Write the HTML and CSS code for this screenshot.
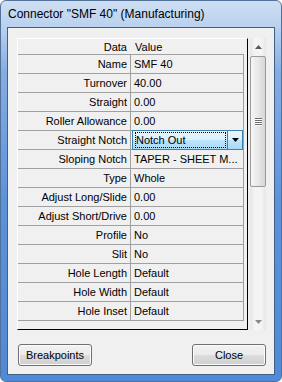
FILE: index.html
```html
<!DOCTYPE html>
<html lang="en">
<head>
    <meta charset="UTF-8">
    <title>Connector "SMF 40" (Manufacturing)</title>
    <link rel="stylesheet" href="styles.css">
</head>
<body>
    <div class="window">
        <div class="titlebar">Connector "SMF 40" (Manufacturing)</div>
        <div class="client">
            <div class="gridarea">
                <div class="grid">
                    <div class="row head">
                        <div class="label">Data</div>
                        <div class="value">Value</div>
                    </div>
                    <div class="row"><div class="label">Name</div><div class="value">SMF 40</div></div>
                    <div class="row"><div class="label">Turnover</div><div class="value">40.00</div></div>
                    <div class="row"><div class="label">Straight</div><div class="value">0.00</div></div>
                    <div class="row"><div class="label">Roller Allowance</div><div class="value">0.00</div></div>
                    <div class="row">
                        <div class="label">Straight Notch</div>
                        <div class="value">
                            <div class="combo">
                                <div class="combo-text"><span class="focus">Notch Out</span></div>
                                <div class="combo-btn">
                                    <svg width="7" height="4" viewBox="0 0 7 4"><path d="M0 0h7L3.5 4z" fill="#000"/></svg>
                                </div>
                            </div>
                        </div>
                    </div>
                    <div class="row"><div class="label">Sloping Notch</div><div class="value">TAPER - SHEET M...</div></div>
                    <div class="row"><div class="label">Type</div><div class="value">Whole</div></div>
                    <div class="row"><div class="label">Adjust Long/Slide</div><div class="value">0.00</div></div>
                    <div class="row"><div class="label">Adjust Short/Drive</div><div class="value">0.00</div></div>
                    <div class="row"><div class="label">Profile</div><div class="value">No</div></div>
                    <div class="row"><div class="label">Slit</div><div class="value">No</div></div>
                    <div class="row"><div class="label">Hole Length</div><div class="value">Default</div></div>
                    <div class="row"><div class="label">Hole Width</div><div class="value">Default</div></div>
                    <div class="row"><div class="label">Hole Inset</div><div class="value">Default</div></div>
                </div>
                <div class="scrollbar">
                    <div class="arrow">
                        <svg width="7" height="4" viewBox="0 0 7 4"><path d="M3.5 0L7 4H0z" fill="#5a5a5a"/></svg>
                    </div>
                    <div class="track">
                        <div class="thumb">
                            <div class="grip"></div>
                        </div>
                    </div>
                    <div class="arrow">
                        <svg width="7" height="4" viewBox="0 0 7 4"><path d="M0 0h7L3.5 4z" fill="#8a8a8a"/></svg>
                    </div>
                </div>
            </div>
            <div class="buttons">
                <button class="button">Breakpoints</button>
                <button class="button">Close</button>
            </div>
        </div>
    </div>
</body>
</html>
```

FILE: styles.css
```css
body {
    margin: 0;
    font-family: "Liberation Sans", Arial, sans-serif;
    font-size: 11px;
    color: #000000;
}
.window {
    box-sizing: border-box;
    width: 282px;
    height: 382px;
    border: 1px solid #52729a;
    border-radius: 6px;
    padding: 0 6px 6px 6px;
    background: linear-gradient(to bottom, #cfdff3 0, #b9d1ee 26px, #86ade2 70px, #5d92da 200px, #5089d6 100%);
    display: flex;
    flex-direction: column;
}
.titlebar {
    height: 26px;
    line-height: 26px;
    font-size: 12px;
    padding-left: 1px;
    white-space: nowrap;
}
.client {
    flex: 1;
    border: 1px solid #3f5f86;
    background-color: #f0f0f0;
    padding: 10px 8px 0 9px;
}
.gridarea {
    display: flex;
    height: 292px;
}
.grid {
    box-sizing: border-box;
    width: 231px;
    height: 292px;
    border-top: 1px solid #ffffff;
    border-left: 1px solid #ffffff;
    border-right: 1px solid #000000;
    border-bottom: 1px solid #000000;
}
.row {
    display: flex;
    height: 19px;
    line-height: 18px;
}
.row.head {
    height: 16px;
    line-height: 16px;
}
.label {
    width: 109px;
    padding-right: 3px;
    text-align: right;
    border-right: 1px solid #a0a0a0;
    border-bottom: 1px solid #a0a0a0;
    white-space: nowrap;
}
.value {
    width: 109px;
    padding-left: 3px;
    border-right: 1px solid #a0a0a0;
    border-bottom: 1px solid #a0a0a0;
    white-space: nowrap;
}
.head .label,
.head .value {
    border-color: transparent;
    border-bottom-color: #a0a0a0;
}
.head .label {
    border-right: none;
    padding-right: 4px;
}
.head .value {
    border-right: none;
    padding-left: 4px;
}
.combo {
    display: flex;
    height: 20px;
    margin: -1px 0 -1px -2px;
    box-sizing: border-box;
    border: 1px solid #3c7fb1;
    background: linear-gradient(to bottom, #eaf6fd 0, #d9f0fc 50%, #bee6fd 50%, #a7d9f5 100%);
    line-height: 16px;
}
.combo-text {
    flex: 1;
    padding: 1px 1px 1px 2px;
}
.focus {
    display: block;
    outline: 1px dotted #000000;
    outline-offset: -1px;
    padding-left: 1px;
    height: 16px;
}
.combo-btn {
    width: 14px;
    border-left: 1px solid #3c7fb1;
    display: flex;
    align-items: center;
    justify-content: center;
}
.scrollbar {
    width: 16px;
    margin-left: 2px;
    display: flex;
    flex-direction: column;
    background: linear-gradient(to right, #e6e6e6, #f4f4f4 30%, #f4f4f4 70%, #e6e6e6);
}
.arrow {
    height: 17px;
    display: flex;
    align-items: center;
    justify-content: center;
}
.track {
    flex: 1;
    padding-top: 1px;
}
.thumb {
    box-sizing: border-box;
    height: 131px;
    border: 1px solid #9a9a9a;
    border-radius: 2px;
    background: linear-gradient(to right, #f6f6f6, #e8e8e8 50%, #d6d6d6);
    display: flex;
    align-items: center;
    justify-content: center;
}
.grip {
    width: 7px;
    height: 8px;
    background: repeating-linear-gradient(to bottom, #6e6e6e 0, #6e6e6e 1px, #ffffff 1px, #ffffff 2px);
}
.buttons {
    display: flex;
    justify-content: space-between;
    margin-top: 14px;
    padding-left: 1px;
}
.button {
    width: 74px;
    height: 22px;
    font-family: "Liberation Sans", Arial, sans-serif;
    font-size: 11px;
    color: #000000;
    border: 1px solid #707070;
    border-radius: 3px;
    box-shadow: inset 0 0 0 1px #fcfcfc;
    background: linear-gradient(to bottom, #f2f2f2 0, #ebebeb 50%, #dddddd 50%, #cfcfcf 100%);
    padding: 0;
}
```
